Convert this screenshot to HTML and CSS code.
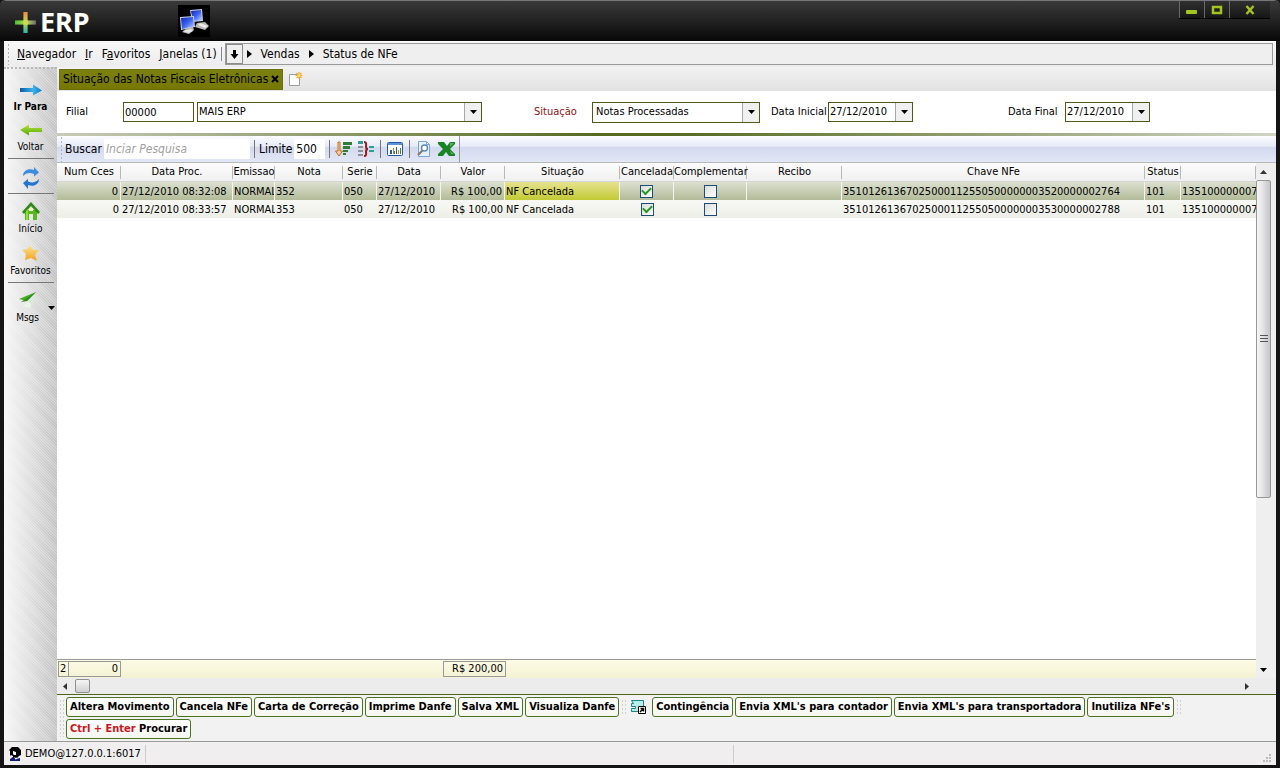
FILE: index.html
```html
<!DOCTYPE html>
<html lang="pt-BR">
<head>
<meta charset="utf-8">
<title>+ERP - Status de NFe</title>
<link rel="stylesheet" href="styles.css">
</head>
<body>
<svg class="defs" width="0" height="0" aria-hidden="true">
  <defs>
    <linearGradient id="g-plus-v" x1="0" y1="0" x2="0" y2="1"><stop offset="0" stop-color="#f08a3c"/><stop offset=".45" stop-color="#c8d84a"/><stop offset="1" stop-color="#2cb8a8"/></linearGradient>
    <linearGradient id="g-plus-h" x1="0" y1="0" x2="1" y2="0"><stop offset="0" stop-color="#4cc02c"/><stop offset=".55" stop-color="#c0d860"/><stop offset="1" stop-color="#6a6a70"/></linearGradient>
    <linearGradient id="g-blue" x1="0" y1="0" x2="1" y2="0"><stop offset="0" stop-color="#0a5cac"/><stop offset=".6" stop-color="#38b4ec"/><stop offset="1" stop-color="#1474c4"/></linearGradient>
    <linearGradient id="g-green" x1="0" y1="0" x2="0" y2="1"><stop offset="0" stop-color="#b4e43c"/><stop offset="1" stop-color="#54a808"/></linearGradient>
    <linearGradient id="g-star" x1="0" y1="0" x2="0" y2="1"><stop offset="0" stop-color="#ffe48c"/><stop offset="1" stop-color="#f0a020"/></linearGradient>
    <linearGradient id="g-screen" x1="0" y1="0" x2="1" y2="1"><stop offset="0" stop-color="#0c24b0"/><stop offset=".5" stop-color="#3c64f0"/><stop offset="1" stop-color="#c4d8ff"/></linearGradient>
    <symbol id="i-down" viewBox="0 0 7 4"><path d="M0 0h7L3.500 4z" fill="#000"/></symbol>
    <symbol id="i-play" viewBox="0 0 5 8"><path d="M0 0l5 4-5 4z" fill="#000"/></symbol>
  </defs>
</svg>

<div class="window">
  <header class="titlebar">
    <div class="logo">
      <svg width="21" height="21" viewBox="0 0 20 20" aria-hidden="true"><path d="M8 0h4v20H8z" fill="url(#g-plus-v)"/><path d="M0 8h20v4H0z" fill="url(#g-plus-h)"/><path d="M8 8h4v4H8z" fill="#d0dc50"/></svg>
      <span>ERP</span>
    </div>
    <div class="net-icon">
      <svg width="32" height="32" viewBox="0 0 32 32" aria-hidden="true">
        <path d="M12 5l12-1 1 12-11 1z" fill="#c8d0e8"/><path d="M13 6l10-1 1 10-9 1z" fill="url(#g-screen)"/>
        <path d="M19 18l8-1 4 4-4 4-10-3z" fill="#b8b8b4"/><path d="M22 18l8 3-3 2-7-3z" fill="#ecece8"/>
        <path d="M2 12l14-1 1 11-14 3z" fill="#c8d0e8"/><path d="M3 13l12-1 1 9-12 3z" fill="url(#g-screen)"/>
        <path d="M9 23l6-1 1 3-5 4-7-2z" fill="#b8b8b4"/><path d="M5 26l8-2 2 2-5 2z" fill="#e8e8e4"/>
      </svg>
    </div>
    <div class="win-buttons">
      <button type="button" aria-label="Minimizar"><svg width="12" height="14" viewBox="0 0 12 14"><rect y="7" width="11" height="4" rx="1" fill="#a4c420"/></svg></button>
      <button type="button" aria-label="Maximizar"><svg width="12" height="14" viewBox="0 0 12 14"><path d="M2 4h8v6H2z" fill="none" stroke="#a4c420" stroke-width="2.500"/></svg></button>
      <button type="button" class="win-close" aria-label="Fechar"><svg width="12" height="14" viewBox="0 0 12 14"><path d="M2.500 3l7 8M9.500 3l-7 8" fill="none" stroke="#a4c420" stroke-width="2.500"/></svg></button>
    </div>
  </header>

  <div class="frame">
    <div class="menubar">
      <span class="grip"></span>
      <nav class="menu">
        <a href="#"><u>N</u>avegador</a>
        <a href="#"><u>I</u>r</a>
        <a href="#">F<u>a</u>voritos</a>
        <a href="#"><u>J</u>anelas (1)</a>
      </nav>
      <div class="path">
        <button type="button" aria-label="Histórico"><svg width="9" height="9" viewBox="0 0 9 9"><path d="M3 0h3v4h2.500L4.500 9 .5 4H3z" fill="#000"/></svg></button>
        <svg width="5" height="8"><use href="#i-play"/></svg><a href="#">Vendas</a>
        <svg width="5" height="8"><use href="#i-play"/></svg><a href="#">Status de NFe</a>
      </div>
    </div>

    <div class="work">
      <aside class="sidebar">
        <button type="button" class="side-strong"><svg width="24" height="16" viewBox="0 0 24 14"><path d="M1 5h13V1.500L23 7.500 14 12.500V9H1z" fill="url(#g-blue)"/></svg>Ir Para</button>
        <button type="button"><svg width="24" height="16" viewBox="0 0 24 14"><path d="M23 5H10V1.500L1 7l9 5.500V9h13z" fill="url(#g-green)"/></svg>Voltar</button>
        <hr>
        <button type="button" class="side-icon" aria-label="Atualizar"><svg width="18" height="22" viewBox="0 0 18 22"><path d="M1 9C1 3 7 1 12 3V0l5 5.500-5 4V7C8 5 4 6 1 9z" fill="#3c8ce0"/><path d="M17 12c0 6-6 8-11 6v4l-5-6 5-4v2.500c4 2 8 1 11-2.500z" fill="#2474d0"/></svg></button>
        <hr>
        <button type="button"><svg width="18" height="18" viewBox="0 0 18 18"><path d="M3 8h12v10h-4v-6H7v6H3z" fill="#58b81c"/><path d="M0 10L9 0l9 10-2 2-7-8-7 8z" fill="#2f8a14"/><path d="M7 6h4v3H7z" fill="#f4f4c0"/><path d="M7 12h4v6H7z" fill="#e8e8e4"/><path d="M4 9l2-2v11H4z" fill="#90dc3c"/></svg>Início</button>
        <button type="button"><svg width="18" height="18" viewBox="0 0 18 18"><path d="M8 1l3 5 6 0-4 5 2 6-6-3-6 2 1-6-4-4 6-1z" fill="url(#g-star)"/></svg>Favoritos</button>
        <hr>
        <button type="button" class="side-msgs"><span class="msgs-col"><svg width="20" height="18" viewBox="0 0 20 18"><path d="M17 4L5 15l7 2z" fill="#ecf4ec"/><path d="M17 4l-2 11-6-5z" fill="#dce8dc"/><path d="M18 1L1 8l8 2z" fill="#44ac24"/><path d="M18 1L3 11l6-1z" fill="#2c8c18"/></svg>Msgs</span><svg width="7" height="4"><use href="#i-down"/></svg></button>
      </aside>

      <main class="main">
        <div class="tabs">
          <div class="tab"><span>Situação das Notas Fiscais Eletrônicas</span><button type="button" aria-label="Fechar aba"><svg width="8" height="8" viewBox="0 0 8 8"><path d="M1 1l6 6M7 1L1 7" stroke="#000" stroke-width="2" fill="none"/></svg></button></div>
          <button type="button" class="new-tab" aria-label="Nova aba"><svg width="14" height="16" viewBox="0 0 14 16"><path d="M.5 3.500h10v11H.5z" fill="#fff" stroke="#9c9c9c"/><path d="M10 1v7M6.500 4.500h7M7.500 2l5 5M12.500 2l-5 5" stroke="#f0a828" stroke-width="1.200"/><circle cx="10" cy="4.500" r="1.500" fill="#ffe070"/></svg></button>
        </div>

        <form class="filters">
          <label for="filial">Filial</label>
          <input id="filial" class="field" type="text" value="00000">
          <div class="combo combo-wide"><select aria-label="Nome da filial"><option>MAIS ERP</option></select><span class="arrow"><svg width="7" height="4"><use href="#i-down"/></svg></span></div>
          <label for="situacao" class="required">Situação</label>
          <div class="combo combo-tall"><select id="situacao"><option>Notas Processadas</option></select><span class="arrow"><svg width="7" height="4"><use href="#i-down"/></svg></span></div>
          <label for="ini">Data Inicial</label>
          <div class="combo"><input id="ini" type="text" value="27/12/2010"><button type="button" class="arrow" aria-label="Abrir calendário"><svg width="7" height="4"><use href="#i-down"/></svg></button></div>
          <label for="fim">Data Final</label>
          <div class="combo"><input id="fim" type="text" value="27/12/2010"><button type="button" class="arrow" aria-label="Abrir calendário"><svg width="7" height="4"><use href="#i-down"/></svg></button></div>
        </form>

        <div class="toolbar">
          <div class="tools">
            <span class="grip"></span>
            <label for="buscar">Buscar</label>
            <input id="buscar" class="search" type="text" placeholder="Inciar Pesquisa">
            <span class="sep"></span>
            <label for="limite">Limite</label>
            <input id="limite" class="limit" type="text" value="500">
            <span class="sep"></span>
            <button type="button" aria-label="Ordenar"><svg width="18" height="16" viewBox="0 0 18 16"><path d="M3 1h2v9h2.500L4 15 .5 10H3z" fill="#f8d0a0" stroke="#c46c1c"/><path d="M8 1h9v3H8zM8 5h7v3H8zM8 9h5v2H8zM8 12h3v2H8z" fill="#2f7c34"/></svg></button>
            <button type="button" aria-label="Agrupar"><svg width="18" height="16" viewBox="0 0 18 16"><path d="M1 0h5v3H1z" fill="#28a098"/><path d="M1 5h5v2H1zM1 9h5v2H1zM1 13h5v2H1z" fill="#8c9498"/><path d="M7 1c3 0 2 3 2 4.500S9.500 8 11 8c-1.500 0-2 1-2 2.500S10 15 7 15" fill="none" stroke="#a01818" stroke-width="2"/><path d="M12 5h5v2h-5zM12 9h5v2h-5z" fill="#28a098"/></svg></button>
            <span class="sep"></span>
            <button type="button" aria-label="Gráfico"><svg width="16" height="14" viewBox="0 0 16 14"><rect x=".5" y=".5" width="15" height="13" rx="1" fill="#fff" stroke="#2458a4"/><path d="M1 1h14v2H1z" fill="#5c94d8"/><path d="M3 8h2v4H3zM9 5h1v7H9z" fill="#2458a4"/><path d="M6 6h1v6H6zM11 8h1v4h-1z" fill="#d08020"/><path d="M7 9h1v3H7zM13 6h1v6h-1z" fill="#2c8c3c"/></svg></button>
            <span class="sep"></span>
            <button type="button" aria-label="Visualizar"><svg width="16" height="16" viewBox="0 0 16 16"><path d="M2.500.5h8l3 3v12h-11z" fill="#e4f0fc" stroke="#7ca4d0"/><path d="M10.500.5v3h3" fill="none" stroke="#7ca4d0"/><circle cx="8.500" cy="7" r="3" fill="#fff" stroke="#5c88b8" stroke-width="1.400"/><path d="M6.500 9.500L2 14" stroke="#8c7464" stroke-width="2"/></svg></button>
            <button type="button" aria-label="Exportar Excel"><svg width="17" height="14" viewBox="0 0 17 14"><path d="M0 0h6l3 4 3-4h5v2l-5 5 5 5v2h-6l-3-4-3 4H0v-2l5-5-5-5z" fill="#188424"/><path d="M12 1h4l-4 4zM12 9l4 3h-3z" fill="#58b060"/></svg></button>
          </div>
        </div>

        <div class="grid-area">
          <div class="grid">
            <table class="notes">
              <colgroup><col class="c64"><col class="c112"><col class="c42"><col class="c68"><col class="c34"><col class="c64"><col class="c64"><col class="c115"><col class="c54"><col class="c73"><col class="c95"><col class="c303"><col class="c36"><col></colgroup>
              <thead><tr><th>Num Cces</th><th>Data Proc.</th><th>Emissao</th><th>Nota</th><th>Serie</th><th>Data</th><th>Valor</th><th>Situação</th><th>Cancelada</th><th>Complementar</th><th>Recibo</th><th>Chave NFe</th><th>Status</th><th></th></tr></thead>
              <tbody>
                <tr class="selected"><td class="num">0</td><td>27/12/2010 08:32:08</td><td>NORMAL</td><td>352</td><td>050</td><td>27/12/2010</td><td class="num">R$ 100,00</td><td class="active">NF Cancelada</td><td class="chk"><input type="checkbox" checked aria-label="Cancelada"></td><td class="chk"><input type="checkbox" aria-label="Complementar"></td><td></td><td>35101261367025000112550500000003520000002764</td><td>101</td><td>135100000007</td></tr>
                <tr><td class="num">0</td><td>27/12/2010 08:33:57</td><td>NORMAL</td><td>353</td><td>050</td><td>27/12/2010</td><td class="num">R$ 100,00</td><td>NF Cancelada</td><td class="chk"><input type="checkbox" checked aria-label="Cancelada"></td><td class="chk"><input type="checkbox" aria-label="Complementar"></td><td></td><td>35101261367025000112550500000003530000002788</td><td>101</td><td>135100000007</td></tr>
              </tbody>
            </table>
            <div class="blank"></div>
            <div class="totals"><span>2</span><span class="num">0</span><i></i><span class="num">R$ 200,00</span></div>
          </div>
          <div class="vscroll">
            <svg width="7" height="4" viewBox="0 0 7 4"><path d="M0 4h7L3.500 0z" fill="#333"/></svg>
            <div class="vtrack"><div class="vthumb"><svg width="8" height="8" viewBox="0 0 8 8"><path d="M0 .5h8M0 3.500h8M0 6.500h8" stroke="#555"/></svg></div></div>
            <svg width="7" height="4"><use href="#i-down"/></svg>
          </div>
        </div>
        <div class="hscroll">
          <svg width="4" height="7" viewBox="0 0 4 7"><path d="M4 0v7L0 3.500z" fill="#333"/></svg>
          <div class="hthumb"></div>
          <svg class="hright" width="4" height="7" viewBox="0 0 4 7"><path d="M0 0v7l4-3.500z" fill="#333"/></svg>
        </div>

        <div class="actions">
          <span class="grip grip-wide"></span>
          <div class="action-rows">
            <div class="action-row">
              <button type="button">Altera Movimento</button>
              <button type="button">Cancela NFe</button>
              <button type="button">Carta de Correção</button>
              <button type="button">Imprime Danfe</button>
              <button type="button">Salva XML</button>
              <button type="button">Visualiza Danfe</button>
              <span class="grip grip-wide"></span>
              <svg class="conf" width="17" height="16" viewBox="0 0 17 16"><path d="M1.500 1.500h12v7h-5v4h-7v-3h4v-2h-4v-3h2z" fill="#b8ece8" stroke="#208088"/><path d="M8.500 7.500h7v7h-7z" fill="#fff" stroke="#000"/><path d="M10 13l3-3M10.500 9.500h3v3" stroke="#000" stroke-width="1.500" fill="none"/></svg>
              <button type="button">Contingência</button>
              <button type="button">Envia XML's para contador</button>
              <button type="button">Envia XML's para transportadora</button>
              <button type="button">Inutiliza NFe's</button>
              <span class="grip grip-wide"></span>
            </div>
            <div class="action-row">
              <button type="button"><span class="key">Ctrl + Enter</span> Procurar</button>
            </div>
          </div>
        </div>
      </main>
    </div>

    <footer class="status">
      <div class="user"><svg width="12" height="14" viewBox="0 0 12 14"><path d="M3 0h6l3 3v5l-2 1-2 2H4V9L2 8 1 9V4l-1-1z" fill="#000"/><path d="M4 4l3 1v3H5L4 7z" fill="#fff"/><path d="M1 12l3-2 3 2 4-1v3H1z" fill="#101878"/><path d="M5 10l2 1 1-1-1 3z" fill="#fff"/></svg>DEMO@127.0.0.1:6017</div>
      <div class="message"></div>
      <svg width="9" height="9" viewBox="0 0 9 9"><path d="M6 0h2v2H6zM3 3h2v2H3zM6 3h2v2H6zM0 6h2v2H0zM3 6h2v2H3zM6 6h2v2H6z" fill="#bbb"/></svg>
    </footer>
  </div>
</div>
</body>
</html>
```
FILE: styles.css
```css
* { box-sizing: border-box; }

body {
  margin: 0;
  background: #1a1a1a;
  color: #000;
  font: 11px/14px "DejaVu Sans Condensed", "Noto Sans", sans-serif;
}

button, input, select { font: inherit; color: inherit; margin: 0; }
button { border: 0; background: none; padding: 0; display: flex; align-items: center; justify-content: center; }
a { color: inherit; text-decoration: none; }
svg { display: block; flex: none; }
.defs { position: absolute; }

.window {
  height: 100vh;
  display: flex;
  flex-direction: column;
  padding: 0 4px 3px;
  background: #141414;
  border-top: 1px solid #77777b;
  border-radius: 6px 6px 0 0;
}

/* Title bar */
.titlebar {
  height: 40px;
  flex: none;
  display: flex;
  margin: 0 -4px;
  padding-left: 15px;
  border-radius: 6px 6px 0 0;
  background: linear-gradient(#3a3a3a, #242424 45%, #080808);
}
.logo { display: flex; align-items: center; gap: 4px; width: 163px; padding-top: 2px; color: #fff; font: bold 27px/40px "Noto Sans", sans-serif; }
.net-icon { height: 32px; margin-top: 4px; background: #000; }
.win-buttons { display: flex; height: 18px; margin: 0 10px 0 auto; border-bottom: 1px solid #000; }
.win-buttons button { width: 25px; border-left: 1px solid #686868; background: linear-gradient(#303030, #161616); }
.win-buttons .win-close { width: 41px; }

.frame { flex: 1; min-height: 0; display: flex; flex-direction: column; background: #f0f0f0; }

.grip { flex: none; width: 3px; align-self: stretch; background: radial-gradient(circle, #b0b0b0 1px, transparent 1px) 0 0 / 3px 4px; }
.grip-wide { width: 5px; margin: 2px 0; background: radial-gradient(circle, #cfcfcf 1px, transparent 1px) 0 0 / 3px 4px; }

/* Menu */
.menubar { height: 26px; flex: none; display: flex; align-items: center; padding: 2px 3px; background: linear-gradient(#f8f8f8, #ececec); font-size: 12px; }
.menu { display: flex; gap: 9px; padding: 0 4px 0 7px; border-right: 1px solid #888; margin-right: 3px; }
.path { flex: 1; height: 22px; display: flex; align-items: center; gap: 9px; border: 1px solid #9a9a9a; background: #efefef; }
.path button { width: 17px; height: 20px; border: 1px solid #8c8c8c; margin-right: -5px; }

.work { flex: 1; min-height: 0; display: flex; }

/* Sidebar */
.sidebar {
  flex: none;
  width: 53px;
  display: flex;
  flex-direction: column;
  padding-top: 13px;
  border-top: 2px dotted #b8b8b8;
  background:
    repeating-linear-gradient(45deg, transparent 0 1px, rgba(255, 255, 255, .25) 1px 2px),
    linear-gradient(90deg, #f6f6f6, #dedede 50%, #c2c2c2);
  font-size: 10px;
}
.sidebar button { flex-direction: column; gap: 2px; margin-bottom: 8px; }
.sidebar button.side-strong { font-weight: bold; }
.sidebar hr { width: 46px; margin: -4px 0 8px 4px; border: 0; border-top: 1px solid #777; align-self: flex-start; }
.sidebar .side-msgs { flex-direction: row; justify-content: flex-end; gap: 9px; padding-right: 2px; }
.msgs-col { display: flex; flex-direction: column; align-items: center; gap: 2px; }

.main { flex: 1; min-width: 0; display: flex; flex-direction: column; background: #fff; }

/* Tabs */
.tabs { height: 24px; flex: none; display: flex; align-items: center; gap: 6px; padding: 0 2px; background: linear-gradient(#f2f2f2, #e2e2e2); }
.tab { height: 21px; display: flex; align-items: center; gap: 3px; padding: 0 3px; background: linear-gradient(#7c8010, #767800); border: 1px solid #6c7010; font-size: 12px; }

/* Filters */
.filters {
  flex: none;
  display: grid;
  grid-template-columns: 57px 74px 337px 58px 179px 57px 180px 57px 85px;
  align-items: center;
  height: 45px;
  padding: 0 9px;
  border-bottom: 3px solid;
  border-image: linear-gradient(90deg, #c8ccb8, #55691f 45%, #55691f 50%, #d0d4c4) 1;
}
.filters label { white-space: nowrap; }
.filters .required { color: #8c1414; }
.field, .combo { height: 20px; border: 1px solid #4c5c18; background: #fff; }
.field { padding: 0 1px; width: 71px; }
.combo { display: flex; width: 85px; }
.combo select, .combo input { flex: 1; width: 0; border: 0; padding: 0 1px; background: none; appearance: none; }
.combo-wide { width: 285px; }
.combo-tall { width: 168px; height: 21px; }
.combo-tall select { padding: 0 3px; }
.arrow { width: 17px; display: flex; align-items: center; justify-content: center; border-left: 1px solid #a8a8a8; background: #f0f0f0; }

/* Search toolbar */
.toolbar { height: 27px; flex: none; display: flex; background: linear-gradient(#fcfcff, #e6eaf8 40%, #d3d8ee 42%, #e2e7f6); border-bottom: 1px solid #b8b8b8; font-size: 12px; }
.tools { display: flex; align-items: center; gap: 2px; padding: 0 3px; border-right: 1px solid #999; }
.tools button { width: 20px; }
.tools input { border: 0; height: 20px; padding: 0 2px; background: #fff; }
.search { width: 146px; }
.search::placeholder { color: #a0a0a0; font-style: italic; }
.limit { width: 31px; }
.sep { width: 1px; height: 18px; margin: 0 2px; background: #777; }

/* Grid */
.grid-area { flex: 1; min-height: 0; display: flex; }
.grid { flex: 1; min-width: 0; display: flex; flex-direction: column; }
.notes { width: 100%; table-layout: fixed; border-collapse: separate; border-spacing: 0; }
.notes th, .notes td { white-space: nowrap; text-align: left; line-height: 16px; }
.notes th { height: 19px; padding: 0; font-weight: normal; text-align: center; background: linear-gradient(90deg, #b8b8b8, #b8b8b8) right center / 1px 13px no-repeat, linear-gradient(#fcfcfc, #f0f0f0); border-bottom: 1px solid #d4d4d4; }
.notes td { height: 18px; padding: 2px 1px 0; overflow: hidden; background: linear-gradient(#f8f9f5, #eceee6); }
.notes td.num, .totals .num { text-align: right; padding-right: 2px; }
.notes .selected td { background: linear-gradient(#dce0d0, #b2bb98); border-right: 1px solid #f4f5ee; }
.notes .selected td:last-child { border-right: 0; }
.notes .selected td.active { background: linear-gradient(#e6e290, #c2ca34); }
.notes td.chk { text-align: center; padding-top: 0; }
.c34 { width: 34px; } .c36 { width: 36px; } .c42 { width: 42px; } .c54 { width: 54px; }
.c64 { width: 64px; } .c68 { width: 68px; } .c73 { width: 73px; } .c95 { width: 95px; }
.c112 { width: 112px; } .c115 { width: 115px; } .c303 { width: 303px; }

.chk input { appearance: none; width: 13px; height: 13px; border: 1px solid #1c4c78; background: linear-gradient(135deg, #dcdcd8, #fff); vertical-align: middle; display: inline-grid; place-items: center; }
.chk input:checked::before { content: ""; width: 7px; height: 4px; border: solid #219a21; border-width: 0 0 2px 2px; transform: rotate(-45deg); margin-bottom: 2px; }

.blank { flex: 1; background: #fff; }
.totals { display: grid; grid-template-columns: 10px 53px 322px 63px; height: 19px; padding: 1px 1px 2px; border-top: 1px solid #999; background: linear-gradient(#fcfbe4, #f4f2d4); }
.totals span { border: 1px solid #999; padding: 0 1px; }
.totals span:first-child { border-right: 0; }

/* Scroll bars */
.vscroll { flex: none; width: 20px; display: flex; flex-direction: column; align-items: center; padding: 7px 5px 6px 0; background: #efefef; }
.vtrack { flex: 1; width: 15px; margin: 6px 0; }
.vthumb { height: 66%; border: 1px solid #989898; border-radius: 2px; background: linear-gradient(90deg, #f6f6f6, #e4e4e6 45%, #c4c4ca); display: flex; align-items: center; justify-content: center; }
.hscroll { height: 16px; flex: none; display: flex; align-items: center; padding: 0 27px 0 6px; background: #ececec; }
.hthumb { width: 15px; height: 14px; margin-left: 8px; border: 1px solid #909090; border-radius: 2px; background: linear-gradient(#f6f6f6, #d0d0d4); }
.hright { margin-left: auto; }

/* Actions */
.actions { flex: none; display: flex; gap: 2px; padding: 2px; border-top: 1px solid #4c6418; background: #f2f2f2; font-weight: bold; }
.action-rows { display: flex; flex-direction: column; gap: 2px; }
.action-row { display: flex; gap: 2px; align-items: center; }
.action-row button { height: 20px; padding: 0 3px; border: 1px solid #4c7420; border-radius: 3px; background: linear-gradient(#fff, #f6f6f0); white-space: pre; }
.conf { margin: 0 3px 0 2px; }
.key { color: #d01420; }

/* Status bar */
.status { flex: none; height: 24px; display: flex; align-items: center; padding: 2px 4px 2px 5px; border-top: 1px solid #999; background: #f0eeee; }
.user { display: flex; align-items: center; gap: 4px; height: 18px; padding-right: 4px; border-right: 1px solid #ccc; }
.message { flex: 1; height: 18px; max-width: 588px; border-right: 1px solid #ccc; margin-right: auto; }
.status > svg { align-self: flex-end; }
```
